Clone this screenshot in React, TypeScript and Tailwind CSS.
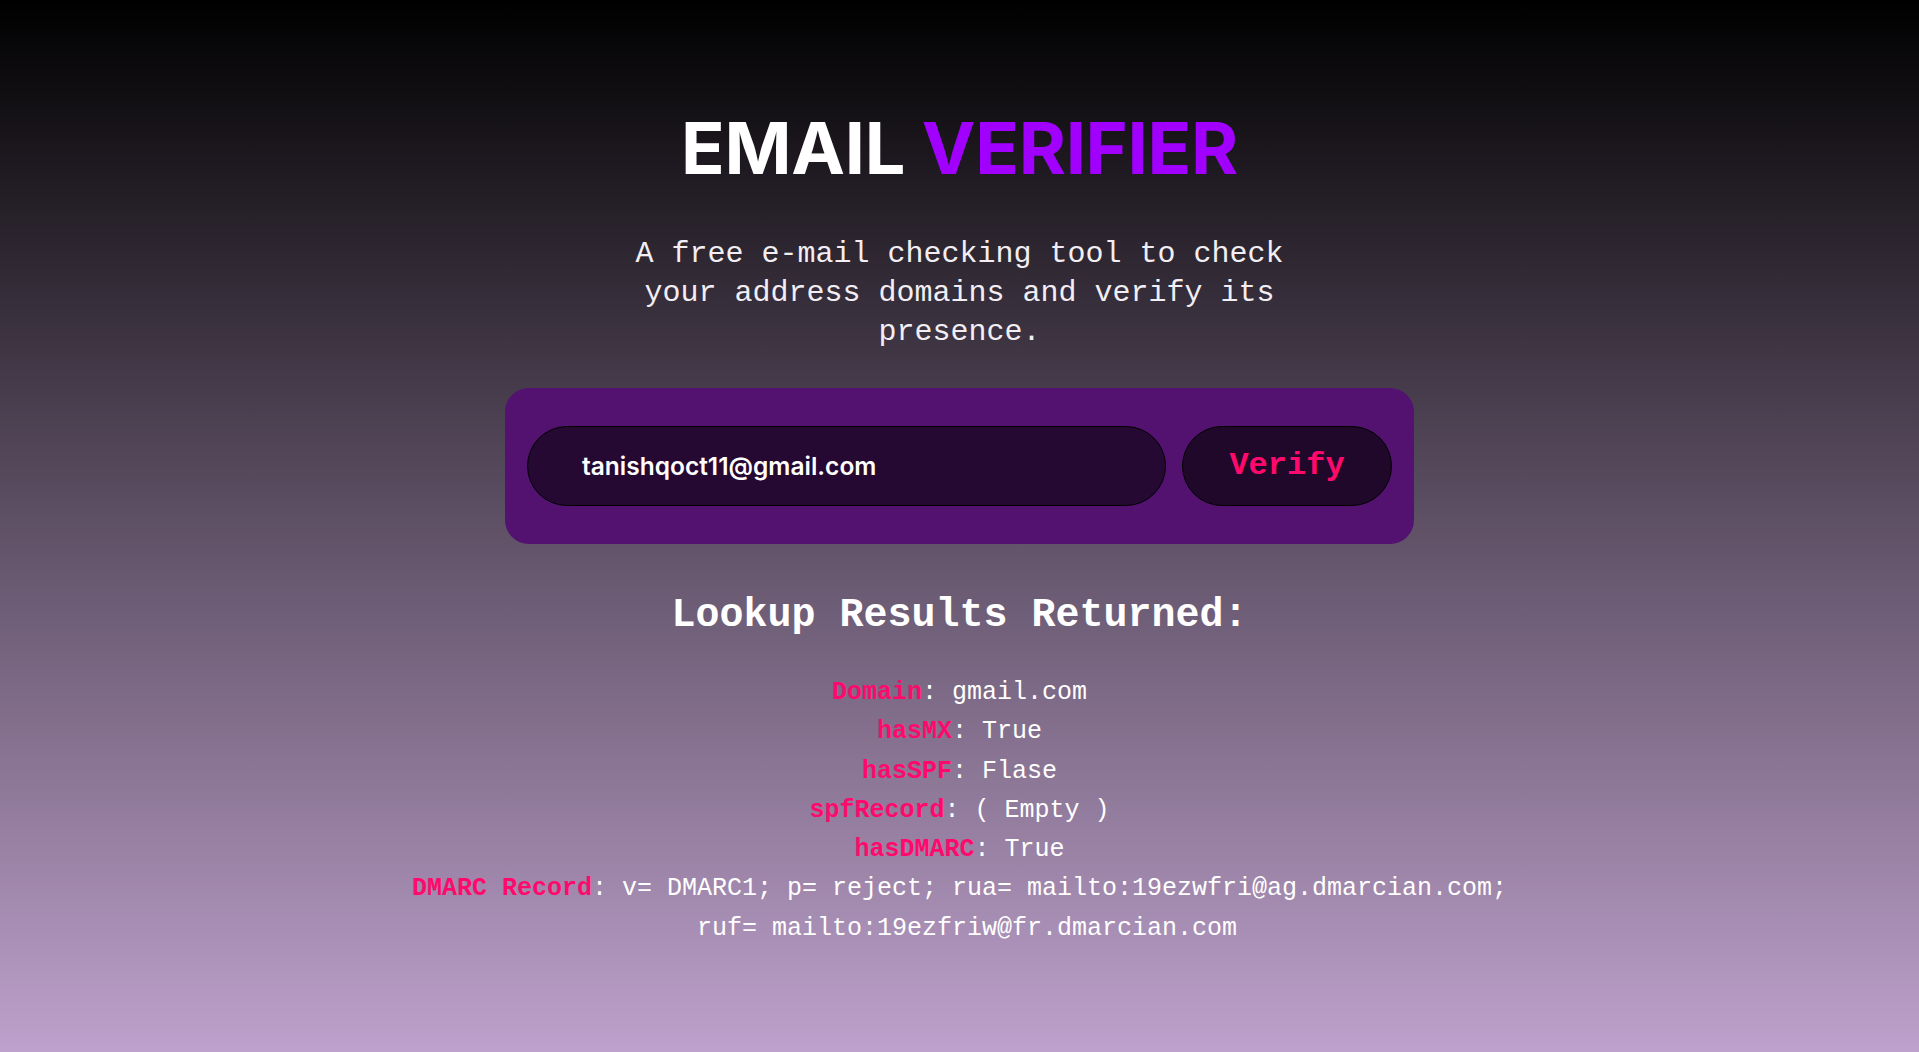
const mono = "font-['Liberation_Mono','DejaVu_Sans_Mono',monospace]";

const results: { label: string; value: string }[] = [
  { label: "Domain", value: "gmail.com" },
  { label: "hasMX", value: "True" },
  { label: "hasSPF", value: "Flase" },
  { label: "spfRecord", value: "( Empty )" },
  { label: "hasDMARC", value: "True" },
  {
    label: "DMARC Record",
    value: "v= DMARC1; p= reject; rua= mailto:19ezwfri@ag.dmarcian.com; \u00a0ruf= mailto:19ezfriw@fr.dmarcian.com",
  },
];

const App = () => {
  return (
    <div className="min-h-screen bg-[linear-gradient(to_bottom,#000000,#bea1cc)] flex flex-col items-center pt-[112px] pb-10">
      {/* Heading */}
      <h1 className="text-[72px] leading-none font-bold font-['Inter','Open_Sans',sans-serif] tracking-[-0.3px]">
        <span className="text-white">EMAIL</span> <span className="text-[#a100ff]">VERIFIER</span>
      </h1>

      <p className={`${mono} mt-[51px] w-[700px] text-center text-[30px] leading-[39px] text-[#f2eef4]`}>
        A free e-mail checking tool to check your address domains and verify its presence.
      </p>

      {/* Search card */}
      <div className="mt-[36px] w-[909px] rounded-3xl bg-[#531270] px-[22px] py-[38px] flex items-center gap-[16px]">
        <div className="flex-1 h-[80px] rounded-full bg-[#250933] border border-black flex items-center pl-[54px]">
          <span className="text-white text-[24.5px] font-semibold font-['Inter','Open_Sans',sans-serif]">
            tanishqoct11@gmail.com
          </span>
        </div>
        <button className={`${mono} w-[210px] h-[80px] rounded-full bg-[#1f0829] border border-black text-[#ff0a6c] text-[32px] font-bold`}>
          Verify
        </button>
      </div>

      {/* Results */}
      <h2 className={`${mono} mt-[52px] text-[40px] leading-none font-bold text-white`}>
        Lookup Results Returned:
      </h2>

      <div className={`${mono} mt-[37px] w-[1130px] text-center text-[25px] leading-[39.3px] text-white`}>
        {results.map((r) => (
          <p key={r.label}>
            <span className="text-[#ff0a6c] font-bold">{r.label}</span>: {r.value}
          </p>
        ))}
      </div>
    </div>
  );
};

export default App;
